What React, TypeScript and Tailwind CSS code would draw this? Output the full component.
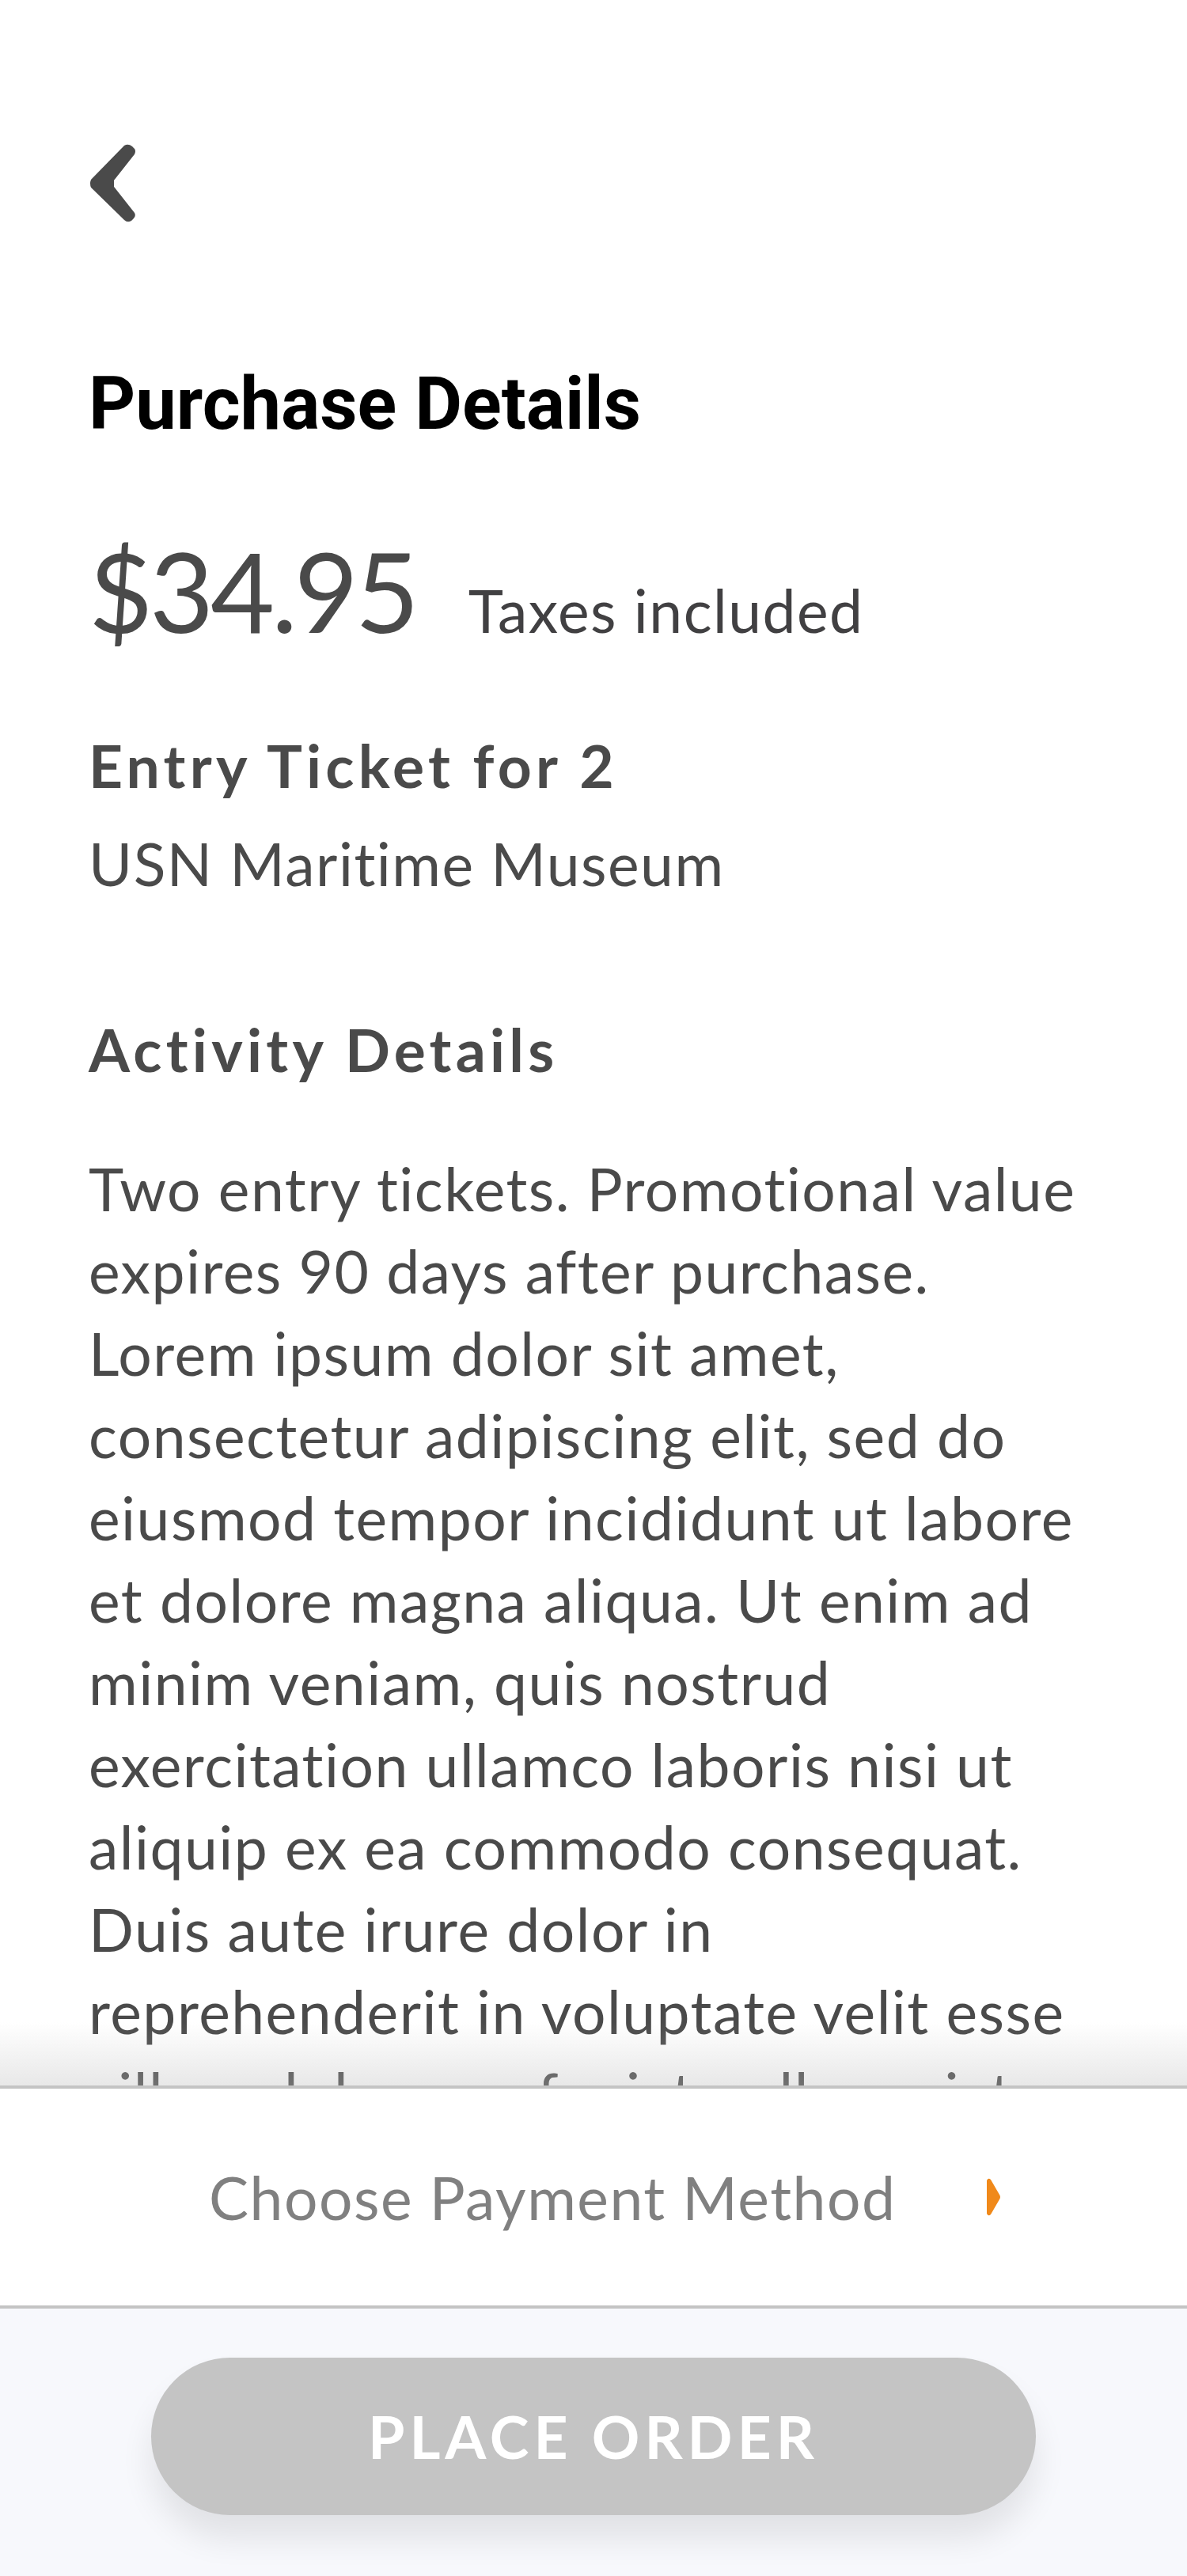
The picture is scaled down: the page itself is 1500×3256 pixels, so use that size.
import React from "react";

const lato = { fontFamily: "Lato, 'Open Sans', sans-serif", fontVariantLigatures: "none" as const };

const bodyLines = [
  "Two entry tickets. Promotional value",
  "expires 90 days after purchase.",
  "Lorem ipsum dolor sit amet,",
  "consectetur adipiscing elit, sed do",
  "eiusmod tempor incididunt ut labore",
  "et dolore magna aliqua. Ut enim ad",
  "minim veniam, quis nostrud",
  "exercitation ullamco laboris nisi ut",
  "aliquip ex ea commodo consequat.",
  "Duis aute irure dolor in",
  "reprehenderit in voluptate velit esse",
  "cillum dolore eu fugiat nulla pariatur.",
  "Excepteur sint occaecat cupidatat non",
  "proident, sunt in culpa qui officia.",
];

function BackChevron() {
  return (
    <svg width="62" height="100" viewBox="0 0 62 100" className="block">
      <path
        d="M45 2 Q50 -1 55 3 L58 6 Q60 9 58 13 L32 46 L32 54 L58 87 Q60 91 57 94 L54 97 Q49 100 45 96 L3 55 Q1 50 3 45 Z"
        fill="#4a4a4a"
      />
    </svg>
  );
}

function OrangeArrow() {
  return (
    <svg width="22" height="50" viewBox="0 0 22 50" className="block">
      <path
        d="M3 4 Q5 0 8 3 L19 22 Q21 25 19 28 L8 47 Q5 50 3 46 Z"
        fill="#f0891a"
      />
    </svg>
  );
}

export default function App() {
  return (
    <div className="relative w-full h-[3256px] overflow-hidden bg-white" style={lato}>
      <div className="pl-[112px] pt-[182px]">
        <BackChevron />
        <h1
          className="mt-[175px] text-[92px] font-bold text-black leading-[1.172]"
          style={{ fontFamily: "Roboto, 'Liberation Sans', sans-serif" }}
        >
          Purchase Details
        </h1>
        <div className="mt-[97px] flex items-baseline gap-[66px]">
          <span className="text-[140px] leading-[1.2] text-[#4a4a4a] font-normal tracking-[-0.03em]">$34.95</span>
          <span className="text-[75px] leading-[1.2] text-[#414042] tracking-[0.02em]">Taxes included</span>
        </div>
        <div className="mt-[92px] text-[75px] leading-[1.2] font-bold text-[#4a4a4a] tracking-[0.07em]">
          Entry Ticket for 2
        </div>
        <div className="mt-[34px] text-[75px] leading-[1.2] text-[#4a4a4a] tracking-[0.02em]">
          USN Maritime Museum
        </div>
        <div className="mt-[145px] text-[75px] leading-[1.2] font-bold text-[#4a4a4a] tracking-[0.07em]">
          Activity Details
        </div>
        <div className="mt-[79px] text-[75px] leading-[104px] text-[#4a4a4a] tracking-[0.02em]">
          {bodyLines.map((l, i) => (
            <div key={i} className="whitespace-nowrap">
              {l}
            </div>
          ))}
        </div>
      </div>

      <div className="absolute left-0 right-0 bottom-0 h-[620px]">
        <div className="absolute left-0 right-0 bottom-full h-[80px] bg-gradient-to-b from-[rgba(187,187,187,0)] to-[rgba(187,187,187,0.34)]" />
        <div className="h-full flex flex-col border-t-4 border-[#c4c4c4]">
          <div className="h-[278px] bg-white flex items-center pl-[264px] border-b-4 border-[#c4c4c4]">
            <span className="text-[75px] text-[#808080] leading-none tracking-[0.02em]">Choose Payment Method</span>
            <div className="ml-[112px]">
              <OrangeArrow />
            </div>
          </div>
          <div className="flex-1 bg-[#f7f8fc] pt-[62px]">
            <button className="mx-auto flex h-[199px] w-[1118px] items-center justify-center rounded-full bg-[#c4c4c4] shadow-[0_30px_40px_rgba(0,0,0,0.09)]">
              <span className="text-[75px] font-bold text-white tracking-[6px] leading-none" style={lato}>
                PLACE ORDER
              </span>
            </button>
          </div>
        </div>
      </div>
    </div>
  );
}
